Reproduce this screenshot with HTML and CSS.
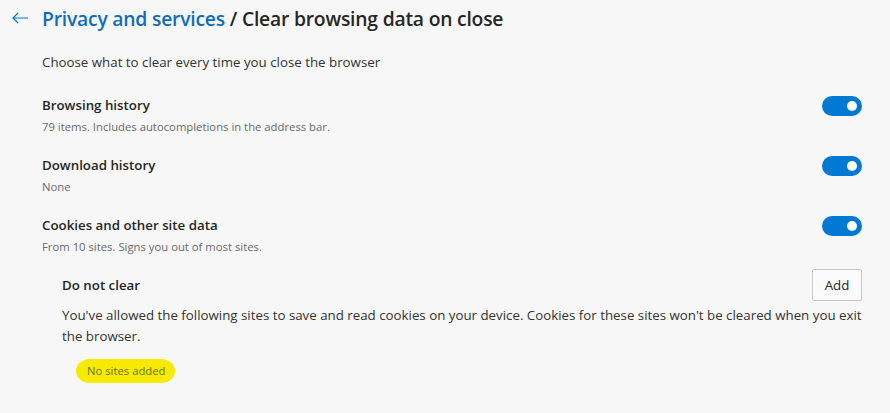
FILE: index.html
```html
<!DOCTYPE html>
<html>
<head>
<meta charset="utf-8">
<link rel="stylesheet" href="styles.css">
</head>
<body>
<div class="page">
  <header class="header">
    <button class="back" aria-label="Back">
      <svg width="16" height="12" viewBox="0 0 16 12"><path d="M6 1 L1 6 L6 11 M1 6 H16" fill="none" stroke="#0078d4" stroke-width="1.2"/></svg>
    </button>
    <h1 class="title"><span class="crumb">Privacy and services</span> / Clear browsing data on close</h1>
  </header>
  <main class="content">
    <p class="intro">Choose what to clear every time you close the browser</p>
    <div class="row">
      <div class="text">
        <div class="label">Browsing history</div>
        <div class="sub">79 items. Includes autocompletions in the address bar.</div>
      </div>
      <span class="toggle"><span class="knob"></span></span>
    </div>
    <div class="row">
      <div class="text">
        <div class="label">Download history</div>
        <div class="sub">None</div>
      </div>
      <span class="toggle"><span class="knob"></span></span>
    </div>
    <div class="row">
      <div class="text">
        <div class="label">Cookies and other site data</div>
        <div class="sub">From 10 sites. Signs you out of most sites.</div>
      </div>
      <span class="toggle"><span class="knob"></span></span>
    </div>
    <section class="exceptions">
      <div class="ex-head">
        <div class="label">Do not clear</div>
        <button class="add">Add</button>
      </div>
      <p class="desc">You've allowed the following sites to save and read cookies on your device. Cookies for these sites won't be cleared when you exit the browser.</p>
      <div class="empty"><span class="mark">No sites added</span></div>
    </section>
  </main>
</div>
</body>
</html>
```
FILE: styles.css
```css
html, body {
  margin: 0;
  padding: 0;
  background: #f7f7f7;
}
body {
  font-family: "Open Sans", "Noto Sans", "Liberation Sans", sans-serif;
  color: #1f1f1f;
  width: 890px;
  height: 413px;
  overflow: hidden;
}
.page {
  padding: 0 28px 0 12px;
}
.header {
  display: flex;
  align-items: center;
  height: 36px;
  gap: 14px;
}
.back {
  border: 0;
  background: none;
  padding: 0;
  width: 16px;
  height: 12px;
  display: flex;
}
.title {
  margin: 0;
  font-size: 19.3px;
  font-weight: 600;
  color: #262626;
  letter-spacing: -0.2px;
}
.crumb {
  color: #0f6cbd;
}
.content {
  padding-left: 30px;
}
.intro {
  margin: 17px 0 0;
  font-size: 13.3px;
  line-height: 18px;
  color: #333;
}
.row {
  display: flex;
  align-items: flex-start;
  justify-content: space-between;
  margin-top: 25px;
  height: 42px;
}
.row + .row { margin-top: 18px; }
.label {
  font-size: 13.3px;
  font-weight: 600;
  line-height: 18px;
  color: #262626;
}
.sub {
  margin-top: 6px;
  font-size: 11.3px;
  line-height: 14px;
  color: #6b6b6b;
}
.toggle {
  width: 40px;
  height: 20px;
  border-radius: 10px;
  background: #0078d4;
  display: flex;
  align-items: center;
  justify-content: flex-end;
  padding-right: 5px;
  box-sizing: border-box;
}
.knob {
  width: 10px;
  height: 10px;
  border-radius: 50%;
  background: #fff;
}
.exceptions {
  padding-left: 20px;
  margin-top: 11px;
}
.ex-head {
  display: flex;
  justify-content: space-between;
  align-items: center;
  height: 32px;
}
.add {
  font-family: inherit;
  font-size: 13.3px;
  color: #262626;
  background: #fbfbfb;
  border: 1px solid #c8c8c8;
  border-radius: 2px;
  width: 50px;
  height: 32px;
  padding: 0;
}
.desc {
  margin: 4px 0 0;
  font-size: 13.3px;
  line-height: 21px;
  color: #333;
}
.empty {
  margin-top: 11px;
  padding-left: 14px;
}
.mark {
  display: inline-block;
  background: #f6eb00;
  border-radius: 14px / 12px;
  padding: 3px 9px 3px 11px;
  font-size: 11.3px;
  line-height: 18px;
  color: #70700a;
}
```
